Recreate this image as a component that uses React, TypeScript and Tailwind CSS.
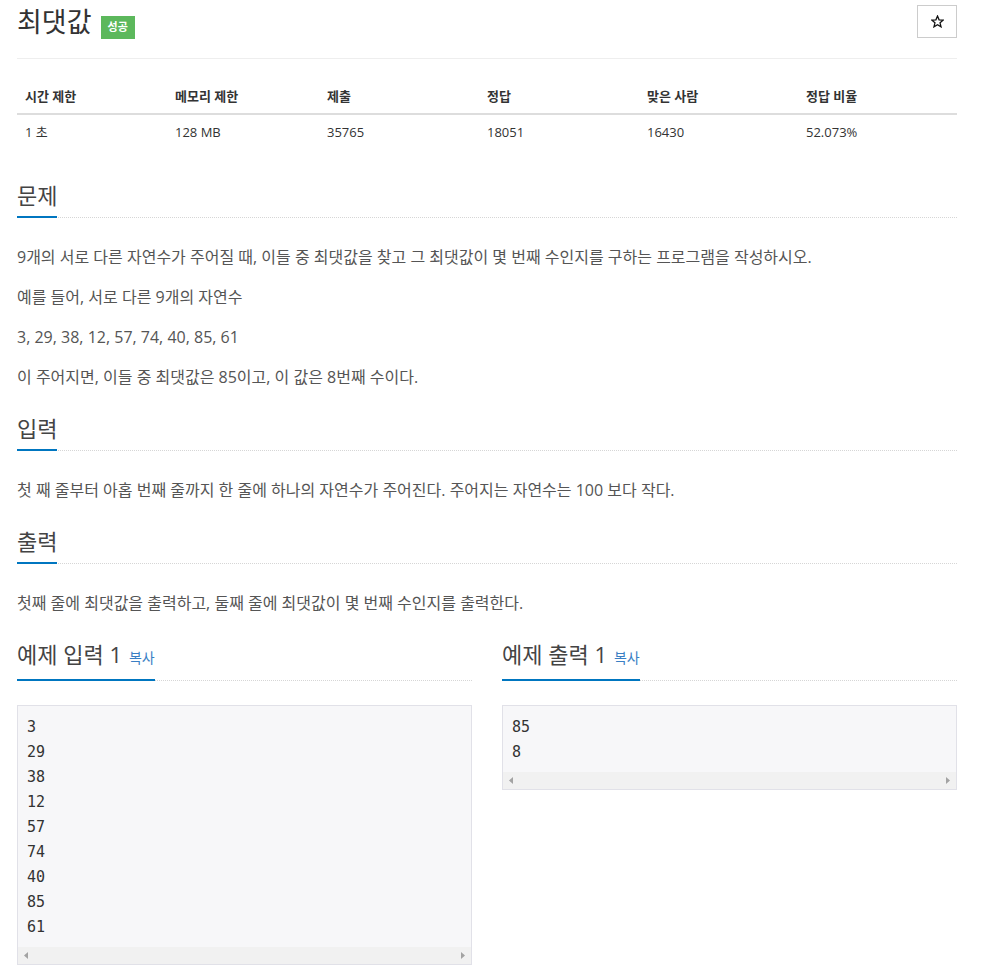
const stats = [
  { label: "시간 제한", value: "1 초" },
  { label: "메모리 제한", value: "128 MB" },
  { label: "제출", value: "35765" },
  { label: "정답", value: "18051" },
  { label: "맞은 사람", value: "16430" },
  { label: "정답 비율", value: "52.073%" },
];

function Headline({ title, copy }: { title: string; copy?: boolean }) {
  return (
    <div className="border-b border-dotted border-[#d6d6d6]">
      <span className="-mb-px inline-block border-b-2 border-[#0076c0] pb-[6px] text-[22px] leading-[30px] text-[#444]">
        {title}
        {copy && <span className="ml-[7px] text-[14px] text-[#3a7fc4]">복사</span>}
      </span>
    </div>
  );
}

function Section({ title, lines }: { title: string; lines: string[] }) {
  return (
    <section className="mb-[24px]">
      <Headline title={title} />
      <div className="mt-[27px] flex flex-col gap-[16px] text-[16px] leading-[24px] text-[#555]">
        {lines.map((l) => (
          <p key={l}>{l}</p>
        ))}
      </div>
    </section>
  );
}

function Sample({ title, lines }: { title: string; lines: string[] }) {
  return (
    <div>
      <Headline title={title} copy />
      <div className="mt-[24px] border border-[#e1e1e8] bg-[#f7f7f9]">
        <pre className="px-[9px] pt-[9px] pb-[7px] font-['DejaVu_Sans_Mono',monospace] text-[15px] leading-[25px] text-[#333]">
          {lines.join("\n")}
        </pre>
        <div className="flex h-[17px] items-center justify-between bg-[#f1f1f1] px-[6px]">
          <svg width="4" height="7" viewBox="0 0 4 7">
            <path d="M4 0 L0 3.5 L4 7 Z" fill="#a3a3a3" />
          </svg>
          <svg width="4" height="7" viewBox="0 0 4 7">
            <path d="M0 0 L4 3.5 L0 7 Z" fill="#a3a3a3" />
          </svg>
        </div>
      </div>
    </div>
  );
}

export default function App() {
  return (
    <div className="min-h-screen bg-white font-['Open_Sans','Noto_Sans_CJK_KR',sans-serif]">
      <div className="ml-[17px] w-[940px] pt-[4px] pb-[8px]">
        <div className="flex items-start justify-between">
          <div className="flex items-start">
            <h1 className="text-[27px] leading-[36px] text-[#333]">최댓값</h1>
            <span className="mt-[12px] ml-[9px] flex h-[23px] items-center bg-[#5cb85c] px-[7px] text-[11px] font-bold text-white">
              성공
            </span>
          </div>
          <button className="mt-[1px] flex h-[33px] w-[40px] items-center justify-center border border-[#ccc] bg-white">
            <svg width="13" height="13" viewBox="0 0 24 24" fill="none" stroke="#111" strokeWidth="2.4" strokeLinejoin="miter">
              <path d="M12 2 L14.9 8.9 L22.5 9.5 L16.7 14.4 L18.5 21.8 L12 17.8 L5.5 21.8 L7.3 14.4 L1.5 9.5 L9.1 8.9 Z" />
            </svg>
          </button>
        </div>

        <div className="mt-[18px] h-px bg-[#eee]" />

        <div className="mt-[20px] grid grid-cols-[150px_152px_160px_160px_159px_159px] text-[13px] leading-[18px] text-[#333]">
          {stats.map((s) => (
            <div key={s.label} className="border-b-2 border-[#ddd] px-[8px] py-[8px] font-bold">
              {s.label}
            </div>
          ))}
          {stats.map((s) => (
            <div key={s.label} className="px-[8px] py-[8px]">
              {s.value}
            </div>
          ))}
        </div>

        <div className="mt-[31px]">
          <Section
            title="문제"
            lines={[
              "9개의 서로 다른 자연수가 주어질 때, 이들 중 최댓값을 찾고 그 최댓값이 몇 번째 수인지를 구하는 프로그램을 작성하시오.",
              "예를 들어, 서로 다른 9개의 자연수",
              "3, 29, 38, 12, 57, 74, 40, 85, 61",
              "이 주어지면, 이들 중 최댓값은 85이고, 이 값은 8번째 수이다.",
            ]}
          />
          <Section
            title="입력"
            lines={["첫 째 줄부터 아홉 번째 줄까지 한 줄에 하나의 자연수가 주어진다. 주어지는 자연수는 100 보다 작다."]}
          />
          <Section
            title="출력"
            lines={["첫째 줄에 최댓값을 출력하고, 둘째 줄에 최댓값이 몇 번째 수인지를 출력한다."]}
          />
        </div>

        <div className="grid grid-cols-2 items-start gap-[30px]">
          <Sample title="예제 입력 1" lines={["3", "29", "38", "12", "57", "74", "40", "85", "61"]} />
          <Sample title="예제 출력 1" lines={["85", "8"]} />
        </div>
      </div>
    </div>
  );
}
